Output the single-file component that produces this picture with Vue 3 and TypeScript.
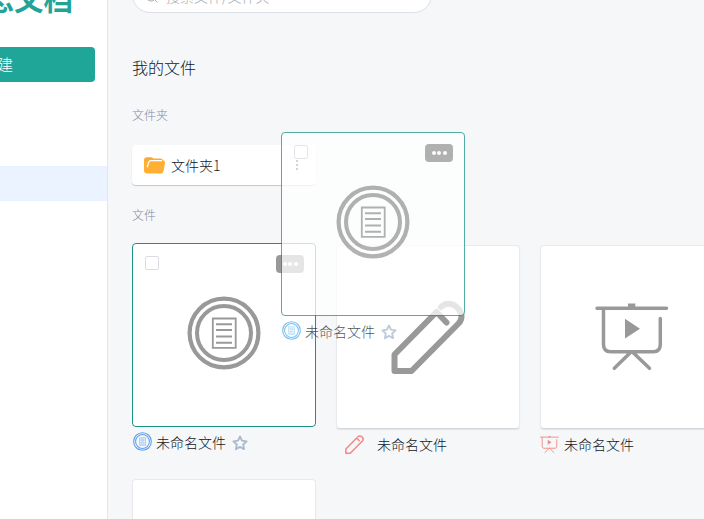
<script setup lang="ts">
type Kind = 'doc' | 'draw' | 'slides' | 'none'

interface FileItem {
  id: number
  kind: Kind
  name: string
  state?: 'active' | 'ghost'
}

const files: FileItem[] = [
  { id: 1, kind: 'doc', name: '未命名文件', state: 'active' },
  { id: 2, kind: 'draw', name: '未命名文件' },
  { id: 3, kind: 'slides', name: '未命名文件' },
  { id: 4, kind: 'none', name: '' },
  { id: 5, kind: 'doc', name: '未命名文件', state: 'ghost' },
]
</script>

<template>
  <div class="app">
    <svg class="defs" aria-hidden="true">
      <symbol id="doc" viewBox="0 0 74 74" fill="none" stroke="currentColor">
        <circle cx="37" cy="37" r="34.4" stroke-width="4.2" />
        <circle cx="37" cy="37" r="27" stroke-width="4" />
        <path d="M25.8 22.5h22.9v29.3h-22.9z" stroke-width="1.8" />
        <path d="M29 28.2h16M29 34h16M29 40.5h16M29 46.8h16" stroke-width="2" />
      </symbol>
      <symbol id="draw" viewBox="0 0 74 74" fill="none" stroke="currentColor" stroke-width="6" stroke-linecap="round" stroke-linejoin="round">
        <path d="M55.500 22.500L45.500 12L3.500 54.500V71H20.500L67.500 23.500C71.500 19.500 71.500 13.500 67.500 9C62.500 2.500 55 2 50 7" />
      </symbol>
      <symbol id="slides" viewBox="0 0 74 74" fill="none" stroke="currentColor" stroke-width="3.500" stroke-linecap="round">
        <path d="M2 8.300H71.500M8.500 9V44.500Q8.500 51.700 15.500 51.700H58.500Q65.300 51.700 65.300 44.500V18.500M35.500 52.500L19.300 68.300M38 52.500L54.500 68.300" />
        <path d="M33 3.500h7.300v5h-7.300zM30 18.700L45 28.700L30 38.400z" fill="currentColor" stroke="none" />
      </symbol>
    </svg>

    <aside class="sidebar">
      <div class="logo">思文档</div>
      <div class="create">新建</div>
      <div class="nav-active"></div>
    </aside>

    <main class="main">
      <div class="search">
        <svg class="search-icon" viewBox="0 0 14 14"><circle cx="6" cy="6" r="5" /><path d="M9.500 9.500l3 3" /></svg>
        <span>搜索文件/文件夹</span>
      </div>
      <h1 class="title">我的文件</h1>
      <h2 class="label">文件夹</h2>
      <div class="folder">
        <svg class="folder-icon" viewBox="0 0 21 17">
          <path d="M3 .3h4.500l2 1.200h7q2.500 0 3 2.700V8H0V3.300q0-3 3-3z" fill="#f9ab31" />
          <path d="M0 4v9.500q0 3 3 3h13.500q2.500 0 3-2.500l1.500-8q.3-2.500-2-2.500z" fill="#ffb034" />
          <path d="M3.200 10.200L4.800 5Q5.200 3.700 6.700 3.700H18" fill="none" stroke="#fff" stroke-width="1.200" />
        </svg>
        <span class="folder-name">文件夹1</span>
        <svg class="dots" viewBox="0 0 4 12"><path d="M1 1h2v2H1zM1 5h2v2H1zM1 9h2v2H1z" /></svg>
      </div>
      <h2 class="label files-label">文件</h2>
      <div class="grid">
        <div v-for="f in files" :key="f.id" class="item" :class="[f.kind, f.state]">
          <div class="card">
            <span v-if="f.state" class="check"></span>
            <span v-if="f.state" class="more"><i></i><i></i><i></i></span>
            <svg v-if="f.kind !== 'none'" class="preview"><use :href="'#' + f.kind" /></svg>
          </div>
          <div v-if="f.name" class="caption">
            <svg class="type"><use :href="'#' + f.kind" /></svg>
            <span class="name">{{ f.name }}</span>
            <svg v-if="f.state" class="star" viewBox="0 0 16 16">
              <path d="M8 1.500l2 4.200 4.600.6-3.400 3.200.9 4.700L8 11.900l-4.100 2.300.9-4.700L1.400 6.300 6 5.700z" />
            </svg>
          </div>
        </div>
      </div>
    </main>
  </div>
</template>

<style>
body {
  overflow: hidden;
}
</style>

<style scoped>
.app {
  position: relative;
  display: flex;
  width: 704px;
  height: 519px;
  overflow: hidden;
  background: #f5f7f9;
  color: #10181f;
  font-family: "Noto Sans CJK SC", sans-serif;
  font-weight: 300;
}
.defs {
  position: absolute;
  width: 0;
  height: 0;
}
.sidebar {
  box-sizing: border-box;
  flex: none;
  display: flex;
  flex-direction: column;
  align-items: flex-end;
  width: 108px;
  background: #fff;
  border-right: 1px solid #e2e5ea;
}
.logo {
  height: 40px;
  margin: -25px 34px 32px 0;
  font-size: 29.5px;
  line-height: 44px;
  font-weight: 700;
  color: #22a397;
  white-space: nowrap;
}
.create {
  box-sizing: border-box;
  width: 120px;
  height: 35px;
  margin-right: 12px;
  padding-right: 82px;
  border-radius: 4px;
  background: #1fa698;
  color: #fff;
  font-size: 16px;
  line-height: 35px;
  text-align: right;
  white-space: nowrap;
}
.nav-active {
  width: 107px;
  height: 35px;
  margin-top: 84px;
  background: #eaf3ff;
}
.main {
  flex: none;
  width: 596px;
  padding-left: 24px;
  box-sizing: border-box;
}
.search {
  box-sizing: border-box;
  display: flex;
  align-items: center;
  gap: 7px;
  width: 300px;
  height: 36px;
  margin-top: -23px;
  padding: 1px 0 0 12px;
  border: 1px solid #dcdfe6;
  border-radius: 18px;
  background: #fff;
  color: #a0a4ac;
  font-size: 14px;
}
.search-icon {
  width: 14px;
  height: 14px;
  margin-top: 2px;
  fill: none;
  stroke: #a8abb2;
}
.title {
  margin: 42px 0 0;
  font-size: 16px;
  line-height: 24px;
  font-weight: 300;
}
.label {
  margin: 26px 0 0;
  font-size: 12px;
  line-height: 20px;
  font-weight: 300;
  color: #84899f;
}
.folder {
  box-sizing: border-box;
  display: flex;
  align-items: center;
  width: 184px;
  height: 40px;
  margin-top: 20px;
  padding: 0 17px 0 12px;
  border-radius: 4px;
  background: #fff;
  box-shadow: 0 1px 1px rgba(0, 0, 0, 0.2);
  font-size: 14px;
}
.folder-icon {
  width: 21px;
  height: 17px;
  margin-right: 6px;
}
.dots {
  width: 4px;
  height: 12px;
  margin-left: auto;
  fill: #555;
}
.files-label {
  margin-top: 20px;
}
.grid {
  display: grid;
  grid-template-columns: repeat(3, 184px);
  grid-auto-rows: 184px;
  gap: 50px 20px;
  margin-top: 20px;
}
.item {
  width: 184px;
}
.active {
  transform: translateY(-2px);
}
.ghost {
  position: absolute;
  left: 281px;
  top: 132px;
  opacity: 0.75;
}
.card {
  position: relative;
  box-sizing: border-box;
  display: flex;
  align-items: center;
  justify-content: center;
  width: 184px;
  height: 184px;
  border: 1px solid #e8eaed;
  border-bottom-color: #d4d7da;
  border-radius: 4px;
  background: #fff;
  box-shadow: 0 1px 1px rgba(0, 0, 0, 0.08);
}
.active .card,
.ghost .card {
  border-color: #1b9283;
  box-shadow: none;
}
.preview {
  width: 74px;
  height: 74px;
  color: #999;
}
.doc .preview {
  margin-bottom: 5px;
}
.check {
  position: absolute;
  left: 12px;
  top: 12px;
  box-sizing: border-box;
  width: 14px;
  height: 14px;
  border: 1px solid #dadde4;
  border-radius: 2px;
  background: #fff;
}
.more {
  position: absolute;
  right: 11px;
  top: 11px;
  display: flex;
  align-items: center;
  justify-content: center;
  gap: 1.5px;
  width: 28px;
  height: 18px;
  border-radius: 4px;
  background: #999;
}
.more i {
  width: 4px;
  height: 4px;
  border-radius: 50%;
  background: #fff;
}
.caption {
  display: flex;
  align-items: center;
  height: 30px;
  font-size: 14px;
  line-height: 20px;
}
.type {
  width: 19px;
  height: 19px;
  color: #f08a88;
}
.doc .type {
  margin: 0 4px 1px 1px;
  color: #5ea1ef;
}
.draw .type {
  margin: 0 13px 0 9px;
}
.slides .type {
  margin: 0 5px 0 0;
}
.ghost .type {
  color: #4eabf0;
}
.star {
  width: 16px;
  height: 16px;
  margin: 1px 0 0 6px;
  fill: none;
  stroke: #a9b9cf;
  stroke-width: 1.800;
  stroke-linejoin: round;
}
</style>
